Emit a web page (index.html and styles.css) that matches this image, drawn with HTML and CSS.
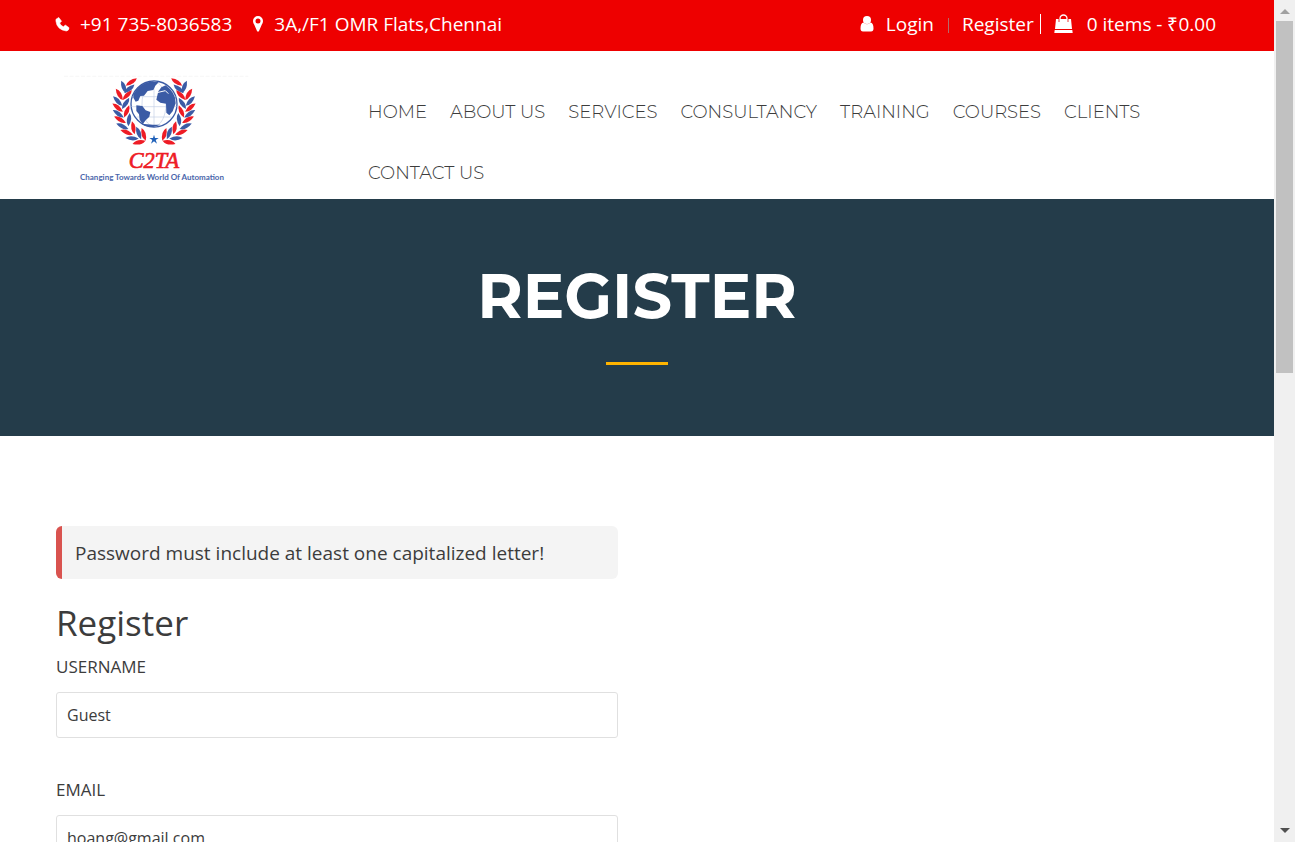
FILE: index.html
```html
<!DOCTYPE html>
<html lang="en">
<head>
<meta charset="utf-8">
<title>Register - C2TA</title>
<meta name="viewport" content="width=device-width, initial-scale=1">
<link rel="stylesheet" href="styles.css">
</head>
<body>
<div class="page">
  <div class="topbar">
    <div class="group contact">
      <a class="item" href="#"><svg class="icon" width="15" height="16" viewBox="0 0 16 16" aria-hidden="true"><path d="M1 3 4 1 7 5 5 7Q6 10 9 11L11 9 15 12Q15 15 12 15.500Q2 14 1 5Z" fill="#fff" stroke="#fff" stroke-linejoin="round" stroke-width=".6"/></svg>+91 735-8036583</a>
      <a class="item" href="#"><svg class="icon" width="12" height="18" viewBox="0 0 12 18" aria-hidden="true"><path fill="#fff" fill-rule="evenodd" d="M6 1a5 5 0 0 1 5 5c0 2-1 3-1.500 4.300L7 16q-1 1.500-2 0L2.500 10.300C2 9 1 8 1 6a5 5 0 0 1 5-5Zm0 2.600a2.500 2.500 0 1 0 0 5 2.500 2.500 0 0 0 0-5Z"/></svg>3A,/F1 OMR Flats,Chennai</a>
    </div>
    <div class="group account">
      <a class="item login" href="#"><svg class="icon" width="14" height="18" viewBox="0 0 14 18" aria-hidden="true"><circle cx="7" cy="5" r="4" fill="#fff"/><path fill="#fff" d="M3.500 7.500Q.5 8 .5 13.500q0 3 2.500 3h8q2.500 0 2.500-3 0-5.500-3-6Q7 11 3.500 7.500Z"/></svg>Login</a>
      <a class="item register" href="#">Register</a>
      <a class="item cart" href="#"><svg class="icon" width="19" height="20" viewBox="0 0 19 20" aria-hidden="true"><path fill="#fff" d="M2 5h15l1 10H1ZM.7 16h17.600l.4 3H.3Z"/><path fill="none" stroke="#fff" stroke-width="1.300" d="M6 8V4.500a3.500 3.500 0 0 1 7 0V8"/><path fill="none" stroke="#e00" stroke-width=".8" d="M5 5v3M14 5v3"/></svg>0 items - ₹0.00</a>
    </div>
  </div>

  <header class="header">
    <a class="brand" href="#" aria-label="C2TA home">
      <svg class="logo" width="190" height="130" viewBox="0 0 570 390">
        <defs>
          <path id="leaf" d="M-20 0Q-4-13 20 0Q4 13-20 0Z"/>
          <g id="branch">
            <g fill="#ee1c25">
              <use href="#leaf" transform="translate(214 51) rotate(-35)"/>
              <use href="#leaf" transform="translate(178 88) rotate(58)"/>
              <use href="#leaf" transform="translate(202 90) rotate(-48)"/>
              <use href="#leaf" transform="translate(173 128) rotate(38)"/>
              <use href="#leaf" transform="translate(200 139) rotate(-68)"/>
              <use href="#leaf" transform="translate(180 164) rotate(28)"/>
              <use href="#leaf" transform="translate(220 188) rotate(78)"/>
              <use href="#leaf" transform="translate(200 202) rotate(20)"/>
              <use href="#leaf" transform="translate(251 208) rotate(72)"/>
              <use href="#leaf" transform="translate(237 232) rotate(-14)"/>
            </g>
            <g fill="#3b5ba5">
              <use href="#leaf" transform="translate(191 66) rotate(68)"/>
              <use href="#leaf" transform="translate(208 71) rotate(-40)"/>
              <use href="#leaf" transform="translate(173 108) rotate(46)"/>
              <use href="#leaf" transform="translate(197 115) rotate(-58)"/>
              <use href="#leaf" transform="translate(175 146) rotate(34)"/>
              <use href="#leaf" transform="translate(207 164) rotate(-84)"/>
              <use href="#leaf" transform="translate(187 184) rotate(24)"/>
              <use href="#leaf" transform="translate(236 204) rotate(68)"/>
              <use href="#leaf" transform="translate(216 220) rotate(2)"/>
            </g>
          </g>
        </defs>
        <path d="M12 34H565" stroke="#f3f3f3" stroke-width="2" stroke-dasharray="12 5"/>
        <use href="#branch"/>
        <use href="#branch" transform="translate(564 0) scale(-1 1)"/>
        <circle cx="282" cy="117" r="69" fill="#fff" stroke="#3b5ba5" stroke-width="4"/>
        <g fill="none" stroke="#c3cee5" stroke-width="2"><path d="M282 50V184M217 95H347M214 125H350M230 156H334"/><ellipse cx="282" cy="117" rx="36" ry="67"/></g>
        <g fill="#3b5ba5">
          <path d="M220 88Q237 54 277 49L296 52 286 62 280 75 263 78 252 92 241 93 235 107 227 110 220 98Z"/>
          <path d="M229 121 247 123 257 136 271 141 268 155 257 166 248 178 239 164 237 148 229 138Z"/>
          <path d="M295 79 304 67 317 61Q348 83 347 115L338 139 328 151 319 143 318 116 301 113 289 104Z"/>
          <path d="m244 176 35 3 23 0-22 7Q258 186 244 176Z"/>
        </g>
        <path d="M220 110 242 120M291 83 316 77 325 86" fill="none" stroke="#fff" stroke-width="3"/>
        <path fill="#1d5fb8" d="m282 209 3 10h11l-9 6 4 11-9-7-9 7 4-11-9-6h11Z"/>
        <text class="logo-name" x="206" y="310">C2TA</text>
        <text class="logo-tagline" x="60" y="346">Changing Towards World Of Automation</text>
      </svg>
    </a>
    <nav class="nav">
      <a href="#">HOME</a><a href="#">ABOUT US</a><a href="#">SERVICES</a><a href="#">CONSULTANCY</a><a href="#">TRAINING</a><a href="#">COURSES</a><a href="#">CLIENTS</a><a href="#">CONTACT US</a>
    </nav>
  </header>

  <section class="hero"><h1>REGISTER</h1></section>

  <main class="content">
    <div class="column">
      <div class="alert" role="alert">Password must include at least one capitalized letter!</div>
      <form>
        <h2>Register</h2>
        <div class="field"><label for="username">USERNAME</label><input id="username" type="text" value="Guest"></div>
        <div class="field"><label for="email">EMAIL</label><input id="email" type="email" value="hoang@gmail.com"></div>
      </form>
    </div>
  </main>
</div>
<div class="scrollbar" aria-hidden="true">
  <svg width="21" height="21" viewBox="0 0 21 21"><path d="M6 14 11 9 16 14Z" fill="#a0a0a0"/></svg>
  <div class="track"><div class="thumb"></div></div>
  <svg width="21" height="21" viewBox="0 0 21 21"><path d="M6 7H16L11 12Z" fill="#505050"/></svg>
</div>
</body>
</html>
```
FILE: styles.css
```css
* { box-sizing: border-box; }
body {
  margin: 0;
  height: 100vh;
  display: flex;
  overflow: hidden;
  background: #fff;
  color: #3c3c3c;
  font-family: "Open Sans", sans-serif;
  font-size: 19px;
}
a { color: inherit; text-decoration: none; }
.page { flex: 1; min-width: 0; overflow: hidden; }

.topbar {
  display: flex;
  justify-content: space-between;
  padding: 10px 58px 13px 55px;
  background: #e00;
  color: #fff;
  line-height: 28px;
}
.group { display: flex; align-items: center; white-space: nowrap; }
.item { display: flex; align-items: center; }
.contact { gap: 20px; }
.contact .icon { margin-right: 10px; }
.login .icon { margin-right: 12px; }
.register { margin-left: 14px; padding: 0 6px 0 14px; line-height: 20px; border-right: 1px solid #fff; }
.register::before { content: ""; width: 1px; height: 15px; margin: 2px 13px 0 -14px; background: #b56a6a; }
.cart { padding-left: 13px; }
.cart .icon { margin-right: 14px; }

.header { display: flex; padding-left: 60px; }
.brand { flex: none; padding: 14px 0 4px; }
.logo { display: block; }
.logo-name { font: italic 400 67px "Liberation Serif", serif; fill: #ee1c25; stroke: #ee1c25; stroke-width: 2px; }
.logo-tagline { font: 700 24px Lato, sans-serif; fill: #4a66ab; }
.nav {
  flex: 1;
  display: flex;
  flex-wrap: wrap;
  align-content: flex-start;
  gap: 37px 23px;
  padding: 49px 56px 14px 118px;
  font: 300 18px/24px Montserrat, Inter, sans-serif;
}

.hero {
  display: flex;
  flex-direction: column;
  align-items: center;
  padding: 59px 20px 71px;
  background: #243c4a;
  color: #fff;
}
.hero h1 { margin: 0; font: 700 62px/76px Montserrat, Inter, sans-serif; }
.hero::after { content: ""; width: 62px; height: 3px; margin-top: 28px; background: #ffb400; }

.content {
  display: grid;
  grid-template-columns: 1fr 1fr;
  gap: 38px;
  padding: 90px 56px;
}
.alert {
  padding: 13px 13px 12px;
  border-left: 6px solid #d9534f;
  border-radius: 6px;
  background: #f4f4f4;
  line-height: 28px;
}
h2 { margin: 24px 0 10px; font-size: 35px; font-weight: 400; line-height: 40px; }
.field { margin-bottom: 38px; }
.field label { display: block; margin-bottom: 12px; font-size: 17px; line-height: 27px; }
.field input {
  display: block;
  width: 100%;
  height: 46px;
  padding: 0 10px;
  border: 1px solid #e0e0e0;
  border-radius: 3px;
  background: #fff;
  color: #3c3c3c;
  font: 16px "Open Sans", sans-serif;
}

.scrollbar { flex: none; width: 21px; display: flex; flex-direction: column; background: #f0f0f0; }
.scrollbar svg { display: block; flex: none; }
.track { flex: 1; padding: 0 2px; }
.thumb { height: 44%; background: #c1c1c1; }
```
